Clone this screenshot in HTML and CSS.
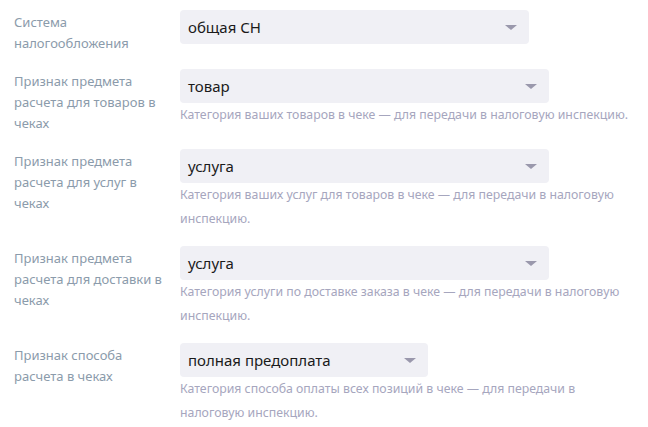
FILE: index.html
```html
<!DOCTYPE html>
<html lang="ru">
<head>
<meta charset="utf-8">
<link rel="stylesheet" href="styles.css">
</head>
<body>
<div class="form">
  <div class="row">
    <div class="label">Система налогообложения</div>
    <div class="control">
      <div class="select w1"><span class="value">общая СН</span><span class="arrow"></span></div>
    </div>
  </div>
  <div class="row">
    <div class="label">Признак предмета расчета для товаров в чеках</div>
    <div class="control">
      <div class="select w2"><span class="value">товар</span><span class="arrow"></span></div>
      <div class="hint">Категория ваших товаров в чеке — для передачи в налоговую инспекцию.</div>
    </div>
  </div>
  <div class="row">
    <div class="label">Признак предмета расчета для услуг в чеках</div>
    <div class="control">
      <div class="select w2"><span class="value">услуга</span><span class="arrow"></span></div>
      <div class="hint">Категория ваших услуг для товаров в чеке — для передачи в налоговую инспекцию.</div>
    </div>
  </div>
  <div class="row">
    <div class="label">Признак предмета расчета для доставки в чеках</div>
    <div class="control">
      <div class="select w2"><span class="value">услуга</span><span class="arrow"></span></div>
      <div class="hint">Категория услуги по доставке заказа в чеке — для передачи в налоговую инспекцию.</div>
    </div>
  </div>
  <div class="row">
    <div class="label">Признак способа расчета в чеках</div>
    <div class="control">
      <div class="select w3"><span class="value">полная предоплата</span><span class="arrow"></span></div>
      <div class="hint">Категория способа оплаты всех позиций в чеке — для передачи в налоговую инспекцию.</div>
    </div>
  </div>
</div>
</body>
</html>
```
FILE: styles.css
```css
html, body {
  margin: 0;
  padding: 0;
  background: #ffffff;
}
body {
  font-family: "Noto Sans", "Open Sans", sans-serif;
}
.form {
  padding: 10px 0 0 14px;
  display: flex;
  flex-direction: column;
  gap: 15px;
}
.row {
  display: flex;
  align-items: flex-start;
}
.label {
  width: 152px;
  padding-top: 2px;
  margin-right: 14px;
  font-size: 13px;
  line-height: 21px;
  color: #8b9bab;
}
.control {
  display: flex;
  flex-direction: column;
}
.select {
  height: 34px;
  box-sizing: border-box;
  background: #f0f0f5;
  border-radius: 4px;
  display: flex;
  align-items: center;
  justify-content: space-between;
  padding: 0 12px 0 8px;
}
.w1 { width: 349px; }
.w2 { width: 369px; }
.w3 { width: 248px; }
.value {
  font-size: 15px;
  color: #1a1a1a;
}
.arrow {
  width: 0;
  height: 0;
  border-left: 6px solid transparent;
  border-right: 6px solid transparent;
  border-top: 5px solid #9a98ac;
}
.hint {
  width: 455px;
  font-size: 12.3px;
  line-height: 24px;
  color: #a6a6be;
}
```
